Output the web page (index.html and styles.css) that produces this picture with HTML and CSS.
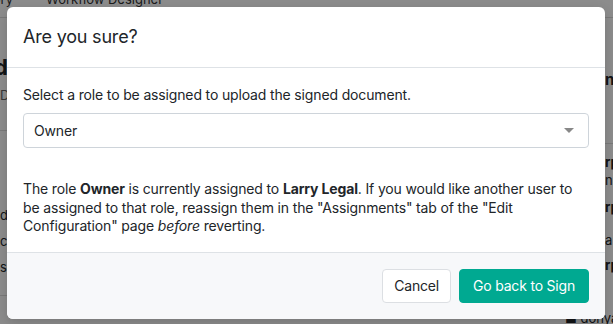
FILE: index.html
```html
<!DOCTYPE html>
<html lang="en">
<head>
    <meta charset="UTF-8">
    <meta name="viewport" content="width=device-width, initial-scale=1.0">
    <title>Revert to Sign</title>
    <link rel="stylesheet" href="styles.css">
</head>
<body>

    <!-- Page behind the dialog -->
    <div class="page">
        <nav class="tabs">
            <span class="tab">History</span>
            <span class="tab">Workflow Designer</span>
        </nav>
        <div class="page-body">
            <section class="main-col">
                <h2 class="page-title">dd</h2>
                <p class="page-sub">Document</p>
                <div class="rule"></div>
                <p class="row-text row-first">d</p>
                <p class="row-text">c</p>
                <p class="row-text">se</p>
                <div class="rule rule-end"></div>
            </section>
            <aside class="side-col">
                <h3 class="side-title">n</h3>
                <div class="rule"></div>
                <p class="side-strong s1">rp</p>
                <p class="side-text t1">ni</p>
                <p class="side-strong s2">rp</p>
                <p class="side-text t2">a</p>
                <p class="side-strong s3">rp</p>
                <p class="side-user">&#9632; donya.</p>
            </aside>
        </div>
    </div>

    <div class="backdrop"></div>

    <!-- Confirmation dialog -->
    <div class="modal">
        <div class="modal-header">
            <h1 class="modal-title">Are you sure?</h1>
        </div>
        <div class="modal-body">
            <label class="field-label" for="role">Select a role to be assigned to upload the signed document.</label>
            <div class="select-wrap">
                <select id="role" class="select">
                    <option>Owner</option>
                    <option>Legal</option>
                </select>
                <span class="caret"></span>
            </div>
            <p class="note">The role <strong>Owner</strong> is currently assigned to <strong>Larry Legal</strong>. If you would like another user to be assigned to that role, reassign them in the "Assignments" tab of the "Edit Configuration" page <em>before</em> reverting.</p>
        </div>
        <div class="modal-footer">
            <button class="btn btn-light">Cancel</button>
            <button class="btn btn-primary">Go back to Sign</button>
        </div>
    </div>

</body>
</html>
```

FILE: styles.css
```css
/* Basic Reset */
* {
    margin: 0;
    padding: 0;
    box-sizing: border-box;
}

body {
    font-family: Inter, "Noto Sans", sans-serif;
    color: #212529;
    background: #fff;
    width: 613px;
    height: 324px;
    overflow: hidden;
    position: relative;
}

/* Background page */
.page {
    height: 100%;
}

.tabs {
    display: flex;
    gap: 33px;
    height: 27px;
    margin-top: -9px;
    border-bottom: 1px solid #dcdcdc;
    font-size: 13px;
    color: #333;
}

.tab:first-child {
    margin-left: -31px;
}

.page-body {
    display: flex;
    justify-content: space-between;
}

.main-col {
    width: 120px;
    padding-top: 36px;
}

.page-title {
    font-size: 22px;
    font-weight: 700;
    line-height: 26px;
    margin-left: -6px;
}

.page-sub {
    font-size: 13px;
    line-height: 16px;
    color: #666;
    margin-top: 7px;
}

.rule {
    border-top: 1px solid #dcdcdc;
    margin-top: 27px;
}

.row-text {
    font-size: 13px;
    line-height: 16px;
    margin-top: 10px;
}

.row-first {
    margin-top: 76px;
}

.rule-end {
    margin-top: 20px;
}

.side-col {
    width: 120px;
    margin-right: -112px;
    padding-top: 53px;
    font-size: 13px;
    line-height: 16px;
}

.side-title {
    font-size: 15px;
    line-height: 18px;
    font-weight: 700;
}

.side-col .rule {
    margin-top: 54px;
}

.side-strong {
    font-weight: 700;
}

.s1 { margin-top: 10px; }
.t1 { margin-top: 2px; }
.s2 { margin-top: 11px; }
.t2 { margin-top: 17px; }
.s3 { margin-top: 9px; }

.side-user {
    margin-top: 37px;
    margin-left: -40px;
}

/* Dimmed backdrop */
.backdrop {
    position: absolute;
    inset: 0;
    background: rgba(0, 0, 0, 0.45);
}

/* Modal */
.modal {
    position: absolute;
    top: 7px;
    left: 7px;
    width: 598px;
    background: #fff;
    border-radius: 6px;
    overflow: hidden;
    box-shadow: 0 4px 12px rgba(0, 0, 0, 0.15);
}

.modal-header {
    padding: 15px 16px;
    border-bottom: 1px solid #dee2e6;
}

.modal-title {
    font-size: 18px;
    font-weight: 400;
    line-height: 30px;
    letter-spacing: -0.2px;
}

.modal-body {
    padding: 16px;
    font-size: 14px;
    line-height: 21px;
    letter-spacing: -0.15px;
}

.field-label {
    display: block;
    margin-bottom: 8px;
}

.select-wrap {
    position: relative;
}

.select {
    appearance: none;
    width: 100%;
    height: 35px;
    padding: 0 10px;
    font: inherit;
    letter-spacing: inherit;
    color: #212529;
    background: #fff;
    border: 1px solid #ced4da;
    border-radius: 4px;
}

.caret {
    position: absolute;
    right: 15px;
    top: 15px;
    border-left: 5px solid transparent;
    border-right: 5px solid transparent;
    border-top: 5px solid #888;
}

.note {
    margin-top: 32px;
    line-height: 18.5px;
}

.note strong {
    font-weight: 700;
}

.modal-footer {
    display: flex;
    justify-content: flex-end;
    gap: 8px;
    padding: 16px;
    background: #f7f8fa;
    border-top: 1px solid #dee2e6;
}

.btn {
    height: 34px;
    padding: 0 13px;
    font-family: inherit;
    font-size: 14px;
    letter-spacing: -0.2px;
    border-radius: 4px;
    cursor: pointer;
}

.btn-light {
    padding: 0 11px;
    background: #fff;
    color: #212529;
    border: 1px solid #dcdfe3;
}

.btn-primary {
    background: #00a991;
    color: #fff;
    border: 1px solid #00a991;
}
```
